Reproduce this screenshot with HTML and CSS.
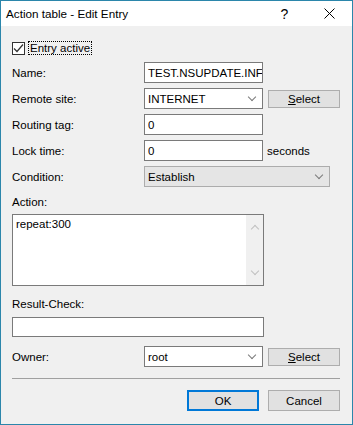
FILE: index.html
```html
<!DOCTYPE html>
<html>

<head>
  <title>Action table - Edit Entry</title>
  <link rel="stylesheet" href="styles.css">
</head>

<body>
  <div class="dialog">
    <div class="titlebar">
      <span class="title">Action table - Edit Entry</span>
      <span class="caption-btn help">?</span>
      <span class="caption-btn close">
        <svg width="11" height="11" viewBox="0 0 11 11">
          <path d="M0.5 0.5 L10.5 10.5 M10.5 0.5 L0.5 10.5" stroke="#000" stroke-width="1" fill="none" />
        </svg>
      </span>
    </div>

    <div class="content">
      <div class="check-row">
        <span class="checkbox">
          <svg width="11" height="11" viewBox="0 0 11 11">
            <path d="M1 5.5 L4 8.5 L10 1.5" stroke="#333" stroke-width="1.2" fill="none" />
          </svg>
        </span>
        <span class="focus-text">Entry active</span>
      </div>

      <div class="row first">
        <span class="label">Name:</span>
        <div class="field">TEST.NSUPDATE.INFO</div>
      </div>

      <div class="row">
        <span class="label">Remote site:</span>
        <div class="field combo">
          <span class="combo-text">INTERNET</span>
          <span class="chevron"></span>
        </div>
        <button class="btn small"><u>S</u>elect</button>
      </div>

      <div class="row">
        <span class="label">Routing tag:</span>
        <div class="field">0</div>
      </div>

      <div class="row">
        <span class="label">Lock time:</span>
        <div class="field">0</div>
        <span class="unit">seconds</span>
      </div>

      <div class="row">
        <span class="label">Condition:</span>
        <div class="field dropdown">
          <span class="combo-text">Establish</span>
          <span class="chevron"></span>
        </div>
      </div>

      <div class="block-label action-label">Action:</div>
      <div class="textarea">
        <div class="textarea-text">repeat:300</div>
        <div class="scrollbar">
          <span class="arrow up"></span>
          <span class="arrow down"></span>
        </div>
      </div>

      <div class="block-label result-label">Result-Check:</div>
      <div class="field wide"></div>

      <div class="row owner">
        <span class="label">Owner:</span>
        <div class="field combo">
          <span class="combo-text">root</span>
          <span class="chevron"></span>
        </div>
        <button class="btn small"><u>S</u>elect</button>
      </div>

      <div class="separator"></div>

      <div class="footer">
        <button class="btn default">OK</button>
        <button class="btn">Cancel</button>
      </div>
    </div>
  </div>
</body>

</html>
```

FILE: styles.css
```css
body {
  margin: 0;
  font-family: "Liberation Sans", Arial, sans-serif;
  font-size: 11.5px;
  color: #000;
}

.dialog {
  width: 353px;
  height: 425px;
  box-sizing: border-box;
  border: 1px solid #2b86ab;
  background-color: #f0f0f0;
  display: flex;
  flex-direction: column;
}

.titlebar {
  height: 25px;
  background-color: #fff;
  display: flex;
  align-items: center;
  padding-left: 5px;
}

.title {
  flex: 1;
  font-size: 11.7px;
}

.caption-btn {
  width: 45px;
  height: 25px;
  display: flex;
  align-items: center;
  justify-content: center;
}

.help {
  font-size: 14px;
}

.content {
  padding: 15px 12px 0 11px;
  display: flex;
  flex-direction: column;
}

.check-row {
  display: flex;
  align-items: center;
  height: 14px;
}

.checkbox {
  width: 11px;
  height: 11px;
  border: 1px solid #333;
  background-color: #fff;
  display: flex;
}

.focus-text {
  margin-left: 3px;
  padding: 0 1px;
  border: 1px dotted #000;
  line-height: 12px;
}

.row {
  display: flex;
  align-items: center;
  height: 21px;
  margin-top: 5px;
}

.row.first {
  margin-top: 7px;
}

.label {
  width: 132px;
  flex-shrink: 0;
}

.field {
  width: 119px;
  height: 21px;
  box-sizing: border-box;
  border: 1px solid #7a7a7a;
  background-color: #fff;
  padding-left: 3px;
  display: flex;
  align-items: center;
  white-space: nowrap;
  overflow: hidden;
  flex-shrink: 0;
}

.combo-text {
  flex: 1;
}

.chevron {
  width: 5px;
  height: 5px;
  border-right: 1px solid #7a7a7a;
  border-bottom: 1px solid #7a7a7a;
  transform: rotate(45deg);
  margin: 0 7px 4px 0;
}

.dropdown {
  width: 186px;
  background-color: #e5e5e5;
  border-color: #acacac;
}

.unit {
  margin-left: 4px;
}

.btn {
  width: 72px;
  height: 21px;
  box-sizing: border-box;
  border: 1px solid #adadad;
  background-color: #e1e1e1;
  font-family: "Liberation Sans", Arial, sans-serif;
  font-size: 11.5px;
  color: #000;
  padding: 0;
}

.btn.small {
  height: 18px;
  margin-left: 5px;
}

.btn.default {
  border: 2px solid #0078d7;
}

.block-label {
  height: 14px;
  line-height: 14px;
}

.action-label {
  margin-top: 8px;
}

.textarea {
  width: 252px;
  height: 72px;
  box-sizing: border-box;
  border: 1px solid #7a7a7a;
  background-color: #fff;
  margin-top: 5px;
  display: flex;
}

.textarea-text {
  flex: 1;
  padding: 3px 0 0 3px;
}

.scrollbar {
  width: 17px;
  background-color: #f0f0f0;
  display: flex;
  flex-direction: column;
  justify-content: space-between;
  align-items: center;
  padding: 8px 0 8px;
}

.arrow {
  width: 5px;
  height: 5px;
  border-right: 1px solid #c0c0c0;
  border-bottom: 1px solid #c0c0c0;
}

.arrow.up {
  transform: rotate(-135deg);
  margin-top: 3px;
}

.arrow.down {
  transform: rotate(45deg);
  margin-bottom: 3px;
}

.result-label {
  margin-top: 11px;
}

.field.wide {
  width: 252px;
  height: 20px;
  margin-top: 6px;
}

.row.owner {
  margin-top: 9px;
}

.separator {
  height: 1px;
  background-color: #a0a0a0;
  margin-top: 11px;
}

.footer {
  display: flex;
  justify-content: flex-end;
  gap: 9px;
  margin-top: 11px;
}
```
